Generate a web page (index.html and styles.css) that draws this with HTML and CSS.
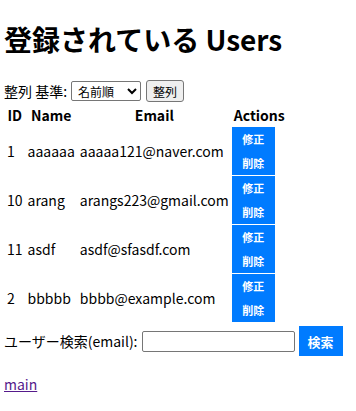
FILE: index.html
```html
<!DOCTYPE html>
<html lang="ja">
<head>
    <meta charset="UTF-8">
    <meta name="viewport" content="width=device-width, initial-scale=1.0">
    <title>Users</title>
    <link rel="stylesheet" href="styles.css">
</head>
<body>
    <h1>登録されている Users</h1>

    <form class="sort-form">
        <label for="sortBy">整列 基準:</label>
        <select id="sortBy">
            <option>名前順</option>
            <option>ID順</option>
        </select>
        <button type="button" class="plain-btn">整列</button>
    </form>

    <table class="user-table">
        <thead>
            <tr>
                <th>ID</th>
                <th>Name</th>
                <th>Email</th>
                <th>Actions</th>
            </tr>
        </thead>
        <tbody>
            <tr>
                <td>1</td>
                <td>aaaaaa</td>
                <td>aaaaa121@naver.com</td>
                <td><div class="actions"><button class="blue-btn">修正</button><button class="blue-btn">削除</button></div></td>
            </tr>
            <tr>
                <td>10</td>
                <td>arang</td>
                <td>arangs223@gmail.com</td>
                <td><div class="actions"><button class="blue-btn">修正</button><button class="blue-btn">削除</button></div></td>
            </tr>
            <tr>
                <td>11</td>
                <td>asdf</td>
                <td>asdf@sfasdf.com</td>
                <td><div class="actions"><button class="blue-btn">修正</button><button class="blue-btn">削除</button></div></td>
            </tr>
            <tr>
                <td>2</td>
                <td>bbbbb</td>
                <td>bbbb@example.com</td>
                <td><div class="actions"><button class="blue-btn">修正</button><button class="blue-btn">削除</button></div></td>
            </tr>
        </tbody>
    </table>

    <form class="search-form">
        <label for="email">ユーザー検索(email):</label>
        <input type="text" id="email">
        <button type="button" class="search-btn">検索</button>
    </form>

    <p class="back"><a href="#">main</a></p>
</body>
</html>
```

FILE: styles.css
```css
body {
    font-family: 'Noto Sans CJK KR', 'Noto Sans CJK JP', sans-serif;
    font-size: 14px;
    margin: 4px;
    color: #000;
}
h1 {
    font-size: 28px;
    font-weight: bold;
    line-height: 40px;
    margin: 15px 0 20px;
}
.sort-form {
    display: flex;
    align-items: center;
    gap: 4px;
    height: 24px;
}
.sort-form select {
    font-family: inherit;
    font-size: 12px;
    width: 70px;
    height: 20px;
    padding: 0 2px;
    border: 1px solid #767676;
    border-radius: 2px;
    background: #fff;
}
.plain-btn {
    font-family: inherit;
    font-size: 12px;
    height: 22px;
    padding: 0 6px;
    border: 1px solid #767676;
    border-radius: 3px;
    background: #efefef;
    margin-left: 1px;
}
.user-table {
    border-spacing: 1px;
}
.user-table th {
    font-weight: bold;
    padding: 0 2px;
    line-height: 22px;
}
.user-table td {
    padding: 0 2px;
}
.user-table td:last-child {
    padding: 0;
}
.actions {
    display: flex;
    flex-direction: column;
    width: 43px;
}
.blue-btn {
    font-family: inherit;
    font-size: 11px;
    font-weight: bold;
    height: 24px;
    border: none;
    background: #007bff;
    color: #fff;
    padding: 0;
}
.search-form {
    display: flex;
    align-items: center;
    gap: 4px;
    margin-top: 3px;
}
.search-form input {
    width: 149px;
    height: 17px;
    border: 1px solid #767676;
    border-radius: 2px;
    padding: 1px;
}
.search-btn {
    font-family: inherit;
    font-size: 13px;
    font-weight: bold;
    width: 44px;
    height: 30px;
    border: none;
    background: #007bff;
    color: #fff;
}
.back {
    margin: 18px 0;
}
.back a {
    color: #551a8b;
}
```
